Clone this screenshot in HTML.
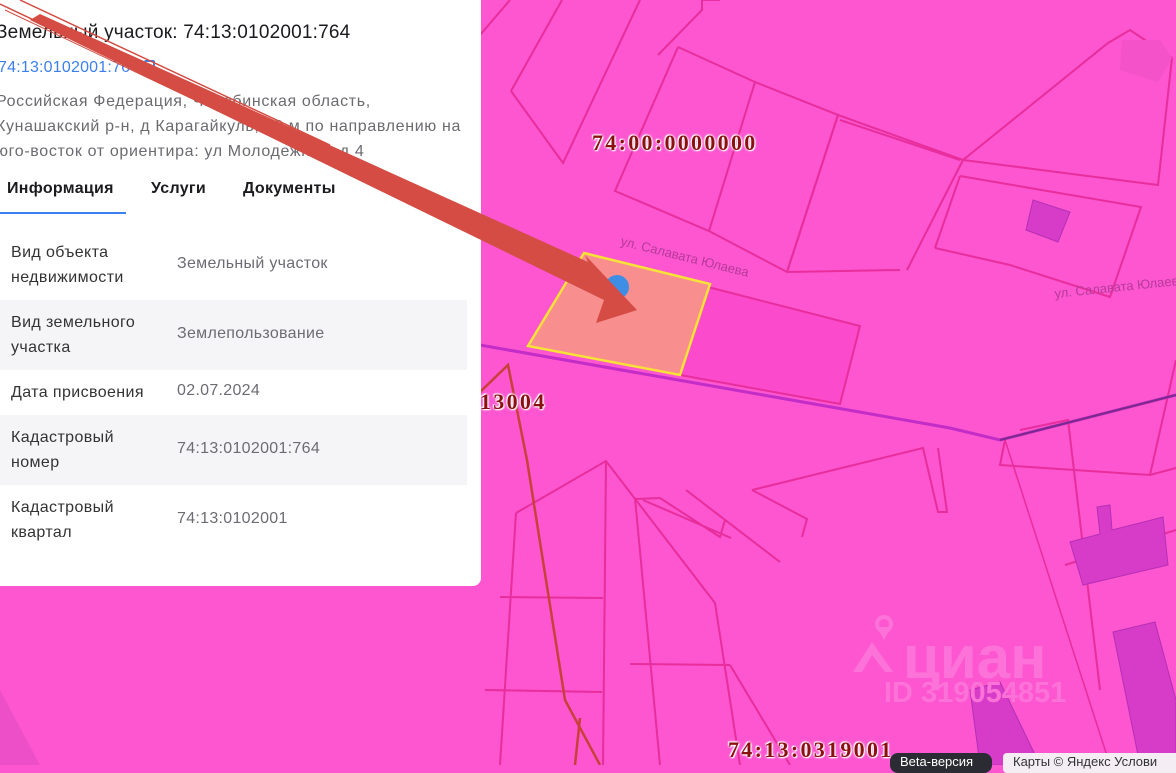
<!DOCTYPE html>
<html><head><meta charset="utf-8"><style>
*{margin:0;padding:0;box-sizing:border-box}
body{width:1176px;height:765px;overflow:hidden;background:#fd56d0;position:relative;font-family:"Liberation Sans","DejaVu Sans",sans-serif}
#map{position:absolute;left:0;top:0}
.panel{position:absolute;left:0;top:0;width:481px;height:586px;background:#fff;border-bottom-right-radius:8px}
.t{position:absolute;white-space:nowrap}
.h1{left:-4px;top:22px;font-size:19px;color:#1b1b1f;letter-spacing:.2px}
.link{left:-2px;top:59px;font-size:16px;color:#3b7ff0;letter-spacing:.2px}
.addr{left:-4px;top:89px;font-size:16px;color:#6b6b70;line-height:25px;letter-spacing:.65px}
.tab{top:180px;font-size:16px;font-weight:bold;color:#1b1b1f;letter-spacing:.3px}
.row{position:absolute;left:0;width:467px;height:70px}
.g{background:#f5f5f7}
.lab{position:absolute;left:11px;font-size:16px;color:#333;line-height:25px;letter-spacing:.4px}
.val{position:absolute;left:177px;font-size:16px;color:#6c6c72;letter-spacing:.3px}
.cad{font-family:"Liberation Serif",serif;font-weight:bold;color:#8b1010;font-size:22px;letter-spacing:2.3px;text-shadow:0 0 2px #fff,0 0 3px #fff,1px 1px 1px #fff,-1px -1px 1px #fff}
</style></head><body>
<svg id="map" width="1176" height="765" viewBox="0 0 1176 765">
<g fill="none" stroke="#e82e9c" stroke-width="2">
<polyline points="480,35 510,0"/>
<polyline points="511,91 562,0"/>
<polyline points="511,91 563,163 640,0"/>
<polyline points="678,47 615,191 709,231 755,82 678,47"/>
<polyline points="755,82 838,115 787,272"/>
<polyline points="702,0 702,10 658,55"/>
<polyline points="720,0 702,0"/>
<polyline points="838,115 963,160 1108,43 1130,30 1172,58 1158,185 963,160"/>
<polyline points="838,115 787,272 709,231"/>
<polyline points="963,160 907,270"/>
<polyline points="840,120 960,160"/>
<polyline points="960,176 1141,207 1110,297 1010,265 935,248"/>
<polyline points="935,248 960,176"/>
<polyline points="788,272 900,270"/>
<polyline points="1176,360 1150,475 1000,465 1005,440"/>
<polyline points="1005,440 1110,765" stroke-width="1.5"/>
<polyline points="1150,475 1176,468"/>
<polyline points="516,513 606,461 715,603 740,765"/>
<polyline points="606,461 603,765"/>
<polyline points="516,513 500,765"/>
<polyline points="635,498 660,765"/>
<polyline points="643,500 731,538"/>
<polyline points="636,499 660,498"/>
<polyline points="660,498 720,537 725,520"/>
<polyline points="686,490 780,562"/>
<polyline points="752,490 923,448 938,512 947,512 938,448"/>
<polyline points="752,490 807,519 802,537"/>
<polyline points="500,597 603,598"/>
<polyline points="485,690 602,692"/>
<polyline points="630,664 730,665"/>
<polyline points="1020,430 1068,420 1100,690"/>
<polyline points="1065,565 1176,530"/>
<polyline points="730,665 790,765"/>
</g>
<polyline points="480,345 950,428 1000,440 1176,395" fill="none" stroke="#c22cc7" stroke-width="3"/>
<polyline points="1000,440 1176,395" fill="none" stroke="#7a2a8a" stroke-width="2"/>
<polyline points="480,392 508,365 527,460 565,700 600,765" fill="none" stroke="#c8403a" stroke-width="2.5"/>
<polyline points="580,718 575,765" fill="none" stroke="#c8403a" stroke-width="2.5"/>
<polyline points="708,287 860,326 840,404 680,375 708,287" fill="#fb4acb" stroke="#e82e9c" stroke-width="2"/>
<polygon points="1033,200 1070,212 1058,242 1026,230" fill="#d63cc8" stroke="#b52fb5"/>
<polygon points="1097,507 1110,505 1112,530 1163,517 1168,565 1083,585 1070,542 1100,534" fill="#d63cc8" stroke="#b52fb5"/>
<polygon points="1113,632 1155,622 1176,700 1176,765 1140,765" fill="#d63cc8" stroke="#b52fb5"/>
<polygon points="970,690 1000,682 1040,765 980,765" fill="#d63cc8" stroke="#b52fb5"/>
<polygon points="1122,40 1160,40 1172,58 1158,82 1120,70" fill="#f352c8"/>
<polygon points="584,253 710,284 680,375 528,346" fill="#f98e8e" stroke="#f7e237" stroke-width="2.5"/>
<circle cx="617" cy="287" r="12" fill="#3f8ee6"/>
<text x="620" y="245" font-size="13" fill="#b53a9a" transform="rotate(14 620 245)" font-family="Liberation Sans">ул. Салавата Юлаева</text>
<text x="1055" y="298" font-size="13" fill="#b53a9a" transform="rotate(-6 1055 298)" font-family="Liberation Sans">ул. Салавата Юлаева</text>
<g fill="#fd72d8" font-family="Liberation Sans" font-weight="bold">
<text x="903" y="678" font-size="60">циан</text>
<text x="884" y="702" font-size="29">ID 319054851</text>
<path d="M853 672 L872 642 L893 672 L885 672 L872 655 L862 672Z"/>
<circle cx="884" cy="624" r="7" fill="none" stroke="#fd72d8" stroke-width="4"/>
<path d="M877 627 L884 640 L891 627Z"/>
</g>
<polygon points="0,690 40,765 0,765" fill="#ec4fc8"/>
</svg>
<div class="panel">
<div class="t h1">Земельный участок: 74:13:0102001:764</div>
<div class="t link">74:13:0102001:764 <span style="display:inline-block;width:11px;height:13px;border:2px solid #3b7ff0;border-radius:2px;vertical-align:-1px"></span></div>
<div class="t addr">Российская Федерация, Челябинская область,<br>Кунашакский р-н, д Карагайкуль, 50 м по направлению на<br>юго-восток от ориентира: ул Молодежная, д 4</div>
<div class="t tab" style="left:7px">Информация</div>
<div class="t tab" style="left:151px">Услуги</div>
<div class="t tab" style="left:243px">Документы</div>
<div style="position:absolute;left:0;top:212px;width:126px;height:2px;background:#3b7ff0"></div>
<div class="row" style="top:230px"><div class="lab" style="top:10px">Вид объекта<br>недвижимости</div><div class="val" style="top:25px">Земельный участок</div></div>
<div class="row g" style="top:300px"><div class="lab" style="top:10px">Вид земельного<br>участка</div><div class="val" style="top:25px">Землепользование</div></div>
<div class="row" style="top:370px;height:45px"><div class="lab" style="top:10px">Дата присвоения</div><div class="val" style="top:12px">02.07.2024</div></div>
<div class="row g" style="top:415px"><div class="lab" style="top:10px">Кадастровый<br>номер</div><div class="val" style="top:25px">74:13:0102001:764</div></div>
<div class="row" style="top:485px"><div class="lab" style="top:10px">Кадастровый<br>квартал</div><div class="val" style="top:25px">74:13:0102001</div></div>
</div>
<svg style="position:absolute;left:0;top:0" width="700" height="340">
<path d="M40,14 L588,262 L585,255 L637,310 L596,323 L604,300 L30,20 Z" fill="#d44c43"/>
<path d="M0,4 L330,160" stroke="#d44c43" stroke-width="1.5"/>
<path d="M20,0 L330,145" stroke="#d44c43" stroke-width="1.5"/>
<path d="M5,10 L300,150" stroke="#d44c43" stroke-width="1"/>
</svg>
<div class="t cad" style="left:592px;top:130px">74:00:0000000</div>
<div class="t cad" style="left:480px;top:389px">13004</div>
<div class="t cad" style="left:728px;top:737px">74:13:0319001</div>
<div class="t" style="left:890px;top:753px;width:102px;height:20px;background:#2b2b33;border-radius:8px;color:#fff;font-size:13px;padding:1px 0 0 10px">Beta-версия</div>
<div class="t" style="left:1003px;top:753px;width:180px;height:20px;background:#f4eef4;border-radius:4px;color:#333;font-size:13px;padding:1px 0 0 10px">Карты © Яндекс  Услови</div>
</body></html>
